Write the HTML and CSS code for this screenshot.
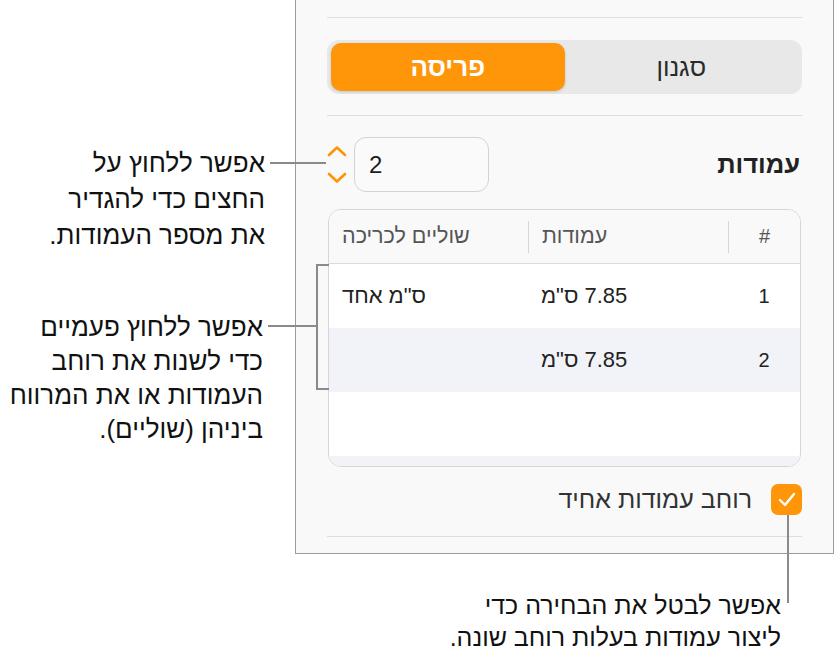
FILE: index.html
```html
<!DOCTYPE html>
<html lang="he">
<head>
  <meta charset="UTF-8">
  <meta name="viewport" content="width=device-width, initial-scale=1.0">
  <title>פריסה - עמודות</title>
  <link rel="stylesheet" href="styles.css">
</head>
<body>

  <div class="stage">

    <div class="panel" dir="rtl">
      <div class="sep"></div>

      <div class="segmented">
        <div class="seg">סגנון</div>
        <div class="seg active">פריסה</div>
      </div>

      <div class="sep sep-gap"></div>

      <div class="field-row">
        <div class="field-label">עמודות</div>
        <div class="stepper">
          <div class="num-box">2</div>
          <svg class="arrows" width="20" height="40" viewBox="0 0 20 40">
            <polyline points="2,10 10,2.5 18,10" fill="none" stroke="#ff9500" stroke-width="2.6" stroke-linecap="round" stroke-linejoin="round"/>
            <polyline points="2,29 10,36.5 18,29" fill="none" stroke="#ff9500" stroke-width="2.6" stroke-linecap="round" stroke-linejoin="round"/>
          </svg>
        </div>
      </div>

      <div class="col-table">
        <div class="t-head">
          <div class="th th-num">#</div>
          <div class="th">עמודות</div>
          <div class="th th-last">שוליים לכריכה</div>
        </div>
        <div class="t-row">
          <div class="td td-num">1</div>
          <div class="td">7.85 ס"מ</div>
          <div class="td">ס"מ אחד</div>
        </div>
        <div class="t-row alt">
          <div class="td td-num">2</div>
          <div class="td">7.85 ס"מ</div>
          <div class="td"></div>
        </div>
        <div class="t-row"></div>
        <div class="t-row alt"></div>
      </div>

      <div class="check-row">
        <div class="checkbox">
          <svg width="18" height="16" viewBox="0 0 18 16">
            <polyline points="2,8 7,13 16,2" fill="none" stroke="#fff" stroke-width="2.4" stroke-linecap="round" stroke-linejoin="round"/>
          </svg>
        </div>
        <div class="check-label">רוחב עמודות אחיד</div>
      </div>

      <div class="sep sep-gap"></div>
    </div>

    <!-- הסברים -->
    <div class="note note-1" dir="rtl">אפשר ללחוץ על<br>החצים כדי להגדיר<br>את מספר העמודות.</div>
    <div class="lead lead-1"></div>

    <div class="note note-2" dir="rtl">אפשר ללחוץ פעמיים<br>כדי לשנות את רוחב<br>העמודות או את המרווח<br>ביניהן (שוליים).</div>
    <div class="lead lead-2"></div>
    <div class="bracket"></div>

    <div class="note note-3" dir="rtl">אפשר לבטל את הבחירה כדי<br>ליצור עמודות בעלות רוחב שונה.</div>
    <div class="lead lead-3"></div>

  </div>

</body>
</html>
```

FILE: styles.css
```css
body {
  margin: 0;
  font-family: "Liberation Sans", "DejaVu Sans", sans-serif;
  color: #1d1d1f;
  background-color: #fff;
}

.stage {
  position: relative;
  width: 835px;
  height: 657px;
  overflow: hidden;
}

.panel {
  margin-left: 295px;
  width: 475px;
  padding: 17px 31px 16px;
  border: 1px solid #9c9c9c;
  border-top: none;
  background-color: #f9f9f9;
}

.sep {
  height: 1px;
  background-color: #dddddd;
}

.sep-gap {
  margin-top: 21px;
}

/* 切替ボタン */
.segmented {
  display: flex;
  height: 54px;
  margin-top: 22px;
  padding: 3px 4px;
  box-sizing: border-box;
  background-color: #e8e8e8;
  border-radius: 12px;
}

.seg {
  flex: 1;
  display: flex;
  align-items: center;
  justify-content: center;
  font-size: 25px;
  color: #2a2a2a;
}

.seg.active {
  background-color: #ff9508;
  color: #fff;
  font-weight: bold;
  font-size: 26px;
  border-radius: 10px;
  box-shadow: 0 1px 3px rgba(0, 0, 0, 0.15);
}

.field-row {
  display: flex;
  align-items: center;
  justify-content: space-between;
  margin-top: 21px;
}

.field-label {
  font-size: 25.5px;
  font-weight: bold;
  padding-right: 2px;
  color: #222;
}

.stepper {
  display: flex;
  align-items: center;
  gap: 7px;
}

.num-box {
  width: 135px;
  height: 55px;
  box-sizing: border-box;
  border: 1.5px solid #d3d3d3;
  border-radius: 12px;
  background-color: #fafafa;
  direction: ltr;
  display: flex;
  align-items: center;
  padding-left: 14px;
  font-size: 24px;
}

.arrows {
  display: block;
}

/* 表 */
.col-table {
  margin: 17px 1px 0;
  height: 258px;
  box-sizing: border-box;
  border: 1.5px solid #d6d6d6;
  border-radius: 13px;
  background-color: #fff;
  overflow: hidden;
}

.t-head,
.t-row {
  display: grid;
  grid-template-columns: 72px 200px 1fr;
  align-items: center;
}

.t-head {
  height: 53px;
  background-color: #f9f9f9;
  border-bottom: 1px solid #dcdcdc;
}

.th {
  height: 32px;
  display: flex;
  align-items: center;
  justify-content: flex-end;
  padding-left: 13px;
  border-left: 1px solid #d6d6d6;
  font-size: 21.5px;
  color: #555;
}

.th-num {
  justify-content: center;
  padding-left: 0;
  font-size: 20px;
}

.th-last {
  border-left: none;
}

.t-row {
  height: 64px;
  font-size: 22px;
  color: #222;
}

.t-row.alt {
  background-color: #f2f3f8;
}

.td {
  text-align: left;
  padding-left: 13px;
}

.td-num {
  text-align: center;
  padding-left: 0;
  font-size: 20px;
}

.check-row {
  display: flex;
  align-items: center;
  gap: 19px;
  margin-top: 17px;
}

.checkbox {
  width: 31px;
  height: 31px;
  border-radius: 7px;
  background-color: #ff9508;
  display: flex;
  align-items: center;
  justify-content: center;
}

.check-label {
  font-size: 25px;
  color: #333;
}

/* 注釈 */
.note {
  position: absolute;
  font-size: 26px;
  color: #111;
  text-align: right;
  white-space: nowrap;
}

.note-1 {
  right: 570px;
  top: 145px;
  line-height: 36px;
}

.note-2 {
  right: 572px;
  top: 310px;
  line-height: 34px;
}

.note-3 {
  right: 54px;
  top: 589px;
  font-size: 25px;
  line-height: 32px;
}

.lead {
  position: absolute;
  background-color: #8a8a8a;
}

.lead-1 {
  left: 270px;
  top: 162px;
  width: 56px;
  height: 2px;
}

.lead-2 {
  left: 268px;
  top: 325px;
  width: 50px;
  height: 2px;
}

.bracket {
  position: absolute;
  left: 316px;
  top: 264px;
  width: 11px;
  height: 122px;
  border: 2px solid #8a8a8a;
  border-right: none;
}

.lead-3 {
  left: 787px;
  top: 515px;
  width: 2px;
  height: 88px;
}
```
